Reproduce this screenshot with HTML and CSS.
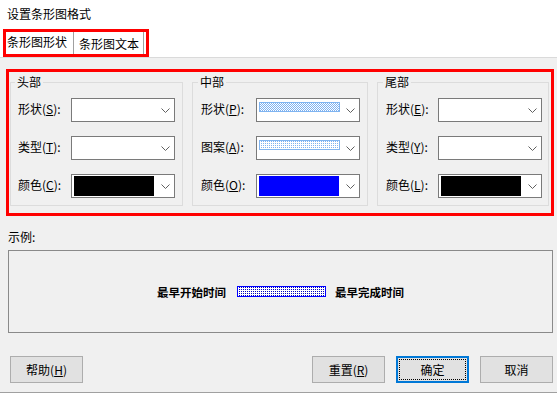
FILE: index.html
```html
<!DOCTYPE html>
<html lang="zh-CN">
<head>
    <meta charset="utf-8">
    <title>设置条形图格式</title>
    <link rel="stylesheet" href="styles.css">
</head>
<body>
    <div class="dialog">
        <div class="titlebar">设置条形图格式</div>

        <div class="tabstrip">
            <div class="tabs">
                <div class="tab active">条形图形状</div>
                <div class="tab">条形图文本</div>
            </div>
        </div>

        <div class="groups">
            <fieldset class="group group-head">
                <legend>头部</legend>
                <div class="row">
                    <label>形状(<u>S</u>):</label>
                    <div class="combo">
                        <svg class="chev" width="9" height="5"><polyline points="0.5,0.5 4.5,4.5 8.5,0.5" fill="none" stroke="#606060"/></svg>
                    </div>
                </div>
                <div class="row">
                    <label>类型(<u>T</u>):</label>
                    <div class="combo">
                        <svg class="chev" width="9" height="5"><polyline points="0.5,0.5 4.5,4.5 8.5,0.5" fill="none" stroke="#606060"/></svg>
                    </div>
                </div>
                <div class="row">
                    <label>颜色(<u>C</u>):</label>
                    <div class="combo">
                        <span class="swatch black"></span>
                        <svg class="chev" width="9" height="5"><polyline points="0.5,0.5 4.5,4.5 8.5,0.5" fill="none" stroke="#606060"/></svg>
                    </div>
                </div>
            </fieldset>

            <fieldset class="group group-mid">
                <legend>中部</legend>
                <div class="row">
                    <label>形状(<u>P</u>):</label>
                    <div class="combo">
                        <span class="pattern dense"></span>
                        <svg class="chev" width="9" height="5"><polyline points="0.5,0.5 4.5,4.5 8.5,0.5" fill="none" stroke="#606060"/></svg>
                    </div>
                </div>
                <div class="row">
                    <label>图案(<u>A</u>):</label>
                    <div class="combo">
                        <span class="pattern sparse"></span>
                        <svg class="chev" width="9" height="5"><polyline points="0.5,0.5 4.5,4.5 8.5,0.5" fill="none" stroke="#606060"/></svg>
                    </div>
                </div>
                <div class="row">
                    <label>颜色(<u>O</u>):</label>
                    <div class="combo">
                        <span class="swatch blue"></span>
                        <svg class="chev" width="9" height="5"><polyline points="0.5,0.5 4.5,4.5 8.5,0.5" fill="none" stroke="#606060"/></svg>
                    </div>
                </div>
            </fieldset>

            <fieldset class="group group-tail">
                <legend>尾部</legend>
                <div class="row">
                    <label>形状(<u>E</u>):</label>
                    <div class="combo">
                        <svg class="chev" width="9" height="5"><polyline points="0.5,0.5 4.5,4.5 8.5,0.5" fill="none" stroke="#606060"/></svg>
                    </div>
                </div>
                <div class="row">
                    <label>类型(<u>Y</u>):</label>
                    <div class="combo">
                        <svg class="chev" width="9" height="5"><polyline points="0.5,0.5 4.5,4.5 8.5,0.5" fill="none" stroke="#606060"/></svg>
                    </div>
                </div>
                <div class="row">
                    <label>颜色(<u>L</u>):</label>
                    <div class="combo">
                        <span class="swatch black"></span>
                        <svg class="chev" width="9" height="5"><polyline points="0.5,0.5 4.5,4.5 8.5,0.5" fill="none" stroke="#606060"/></svg>
                    </div>
                </div>
            </fieldset>
        </div>

        <div class="sample-label">示例:</div>
        <div class="sample">
            <span class="sample-text">最早开始时间</span>
            <span class="sample-bar"></span>
            <span class="sample-text">最早完成时间</span>
        </div>

        <div class="buttons">
            <button class="btn">帮助(<u>H</u>)</button>
            <div class="btn-group">
                <button class="btn">重置(<u>R</u>)</button>
                <button class="btn default">确定</button>
                <button class="btn">取消</button>
            </div>
        </div>
    </div>
</body>
</html>
```

FILE: styles.css
```css
body {
    margin: 0;
    background-color: #f0f0f0;
    font-family: "Noto Sans CJK SC", "Liberation Sans", sans-serif;
    font-size: 12px;
    color: #000;
}
.dialog {
    width: 557px;
    height: 393px;
    box-sizing: border-box;
    border-bottom: 1px solid #a0a0a0;
}
.titlebar {
    height: 28px;
    line-height: 28px;
    padding-left: 7px;
    background-color: #fff;
}

/* tabs */
.tabstrip {
    height: 30px;
    box-sizing: border-box;
    padding: 1px 0 0 3px;
    background-color: #fff;
    border-bottom: 1px solid #dadada;
}
.tabs {
    display: inline-flex;
    height: 28px;
    box-sizing: border-box;
    border: 3px solid #ff0000;
    width: 146px;
}
.tab {
    line-height: 16px;
    padding-top: 2px;
}
.tab.active {
    width: 67px;
    padding-left: 1px;
    box-sizing: border-box;
}
.tab:not(.active) {
    width: 71px;
    padding-top: 4px;
    padding-left: 5px;
    box-sizing: border-box;
    border-left: 1px solid #a0a0a0;
    border-right: 1px solid #a0a0a0;
}

/* groups */
.groups {
    display: flex;
    gap: 9px;
    width: 548px;
    box-sizing: border-box;
    margin: 11px 0 0 6px;
    padding: 2px 1px 7px;
    border: 3px solid #ff0000;
}
.group {
    margin: 0;
    padding: 8px 7px 7px 7px;
    border: 1px solid #dcdcdc;
    box-sizing: border-box;
    min-width: 0;
}
.group legend {
    padding: 0 2px;
    margin-left: -3px;
    line-height: 16px;
}
.group-head { width: 173px; }
.group-mid { width: 176px; padding-left: 8px; }
.group-tail { width: 172px; padding-left: 8px; padding-right: 6px; }

.row {
    display: flex;
    align-items: center;
    justify-content: space-between;
    height: 24px;
}
.row + .row {
    margin-top: 14px;
}
.row label {
    line-height: 16px;
    margin-top: -2px;
}
.combo {
    display: flex;
    align-items: center;
    width: 104px;
    height: 24px;
    box-sizing: border-box;
    padding: 0 4px 0 2px;
    border: 1px solid #7a7a7a;
    background-color: #fff;
}
.chev {
    margin-left: auto;
    display: block;
}
.swatch {
    width: 80px;
    height: 20px;
}
.swatch.black { background-color: #000; }
.swatch.blue { background-color: #0000ff; }
.pattern {
    align-self: flex-start;
    margin-top: 3px;
    width: 81px;
    height: 10px;
    box-sizing: border-box;
    border: 1px solid #80b4f0;
    background-size: 2px 2px;
}
.pattern.dense {
    background-image: repeating-conic-gradient(#7fb2f0 0 25%, #fff 0 50%);
}
.pattern.sparse {
    background-image: conic-gradient(#7fb2f0 0 25%, #fff 0);
}

/* sample */
.sample-label {
    margin-top: 13px;
    padding-left: 8px;
    line-height: 16px;
}
.sample {
    display: flex;
    align-items: center;
    justify-content: center;
    width: 545px;
    height: 83px;
    box-sizing: border-box;
    margin: 5px 0 0 8px;
    border: 1px solid #8a8a8a;
}
.sample-text {
    font-size: 11.5px;
    font-weight: bold;
    line-height: 16px;
}
.sample-bar {
    width: 89px;
    height: 11px;
    box-sizing: border-box;
    margin: -1px 9px 0 11px;
    border: 1px solid #0000ff;
    background-color: #fff;
    background-image: conic-gradient(#0000c0 0 25%, #fff 0);
    background-size: 2px 2px;
}

/* buttons */
.buttons {
    display: flex;
    margin-top: 23px;
    padding: 0 4px 0 10px;
}
.btn-group {
    display: flex;
    gap: 11px;
    margin-left: auto;
}
.btn {
    width: 73px;
    height: 27px;
    padding: 0;
    border: 1px solid #adadad;
    background-color: #e1e1e1;
    font-family: inherit;
    font-size: 12px;
    color: #000;
}
.btn.default {
    border-color: #0078d7;
    box-shadow: inset 0 0 0 1px #0078d7;
    outline: 1px dotted #000;
    outline-offset: -4px;
}
```
